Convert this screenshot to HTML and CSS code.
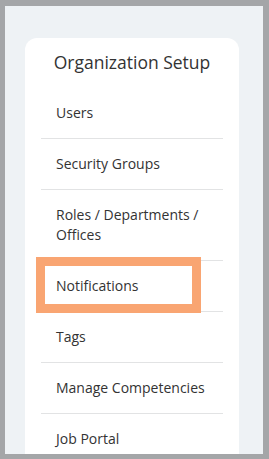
FILE: index.html
```html
<!DOCTYPE html>
<html>
<head>
<meta charset="utf-8">
<link rel="stylesheet" href="styles.css">
</head>
<body>
<div class="frame">
  <div class="panel">
    <div class="card">
      <h2 class="card-title">Organization Setup</h2>
      <ul class="menu">
        <li class="menu-item">Users</li>
        <li class="menu-item">Security Groups</li>
        <li class="menu-item">Roles / Departments / Offices</li>
        <li class="menu-item highlighted">Notifications<span class="mark"></span></li>
        <li class="menu-item">Tags</li>
        <li class="menu-item">Manage Competencies</li>
        <li class="menu-item">Job Portal</li>
      </ul>
    </div>
  </div>
</div>
</body>
</html>
```

FILE: styles.css
```css
html, body {
  margin: 0;
  padding: 0;
  background: #a4a6a8;
}
.frame {
  width: 269px;
  height: 459px;
  padding: 6px 6px 5px 5px;
  box-sizing: border-box;
}
.panel {
  height: 100%;
  background: #eef2f5;
  overflow: hidden;
  padding: 32px 0 0 20px;
  box-sizing: border-box;
}
.card {
  width: 214px;
  min-height: 500px;
  background: #ffffff;
  border-radius: 12px 12px 0 0;
  padding-top: 12px;
  box-sizing: border-box;
  font-family: "Open Sans", "Liberation Sans", sans-serif;
  color: #333333;
}
.card-title {
  margin: 0;
  font-size: 17.5px;
  line-height: 24px;
  font-weight: 400;
  text-align: center;
}
.menu {
  list-style: none;
  margin: 14px 16px 0 16px;
  padding: 0;
}
.menu-item {
  position: relative;
  font-size: 14px;
  line-height: 20px;
  padding: 15px 0 15px 15px;
  border-bottom: 1px solid #e2e3e4;
}
.mark {
  position: absolute;
  left: -5px;
  top: -4px;
  width: 165px;
  height: 56px;
  box-sizing: border-box;
  border: 9px solid #f9a572;
}
```
